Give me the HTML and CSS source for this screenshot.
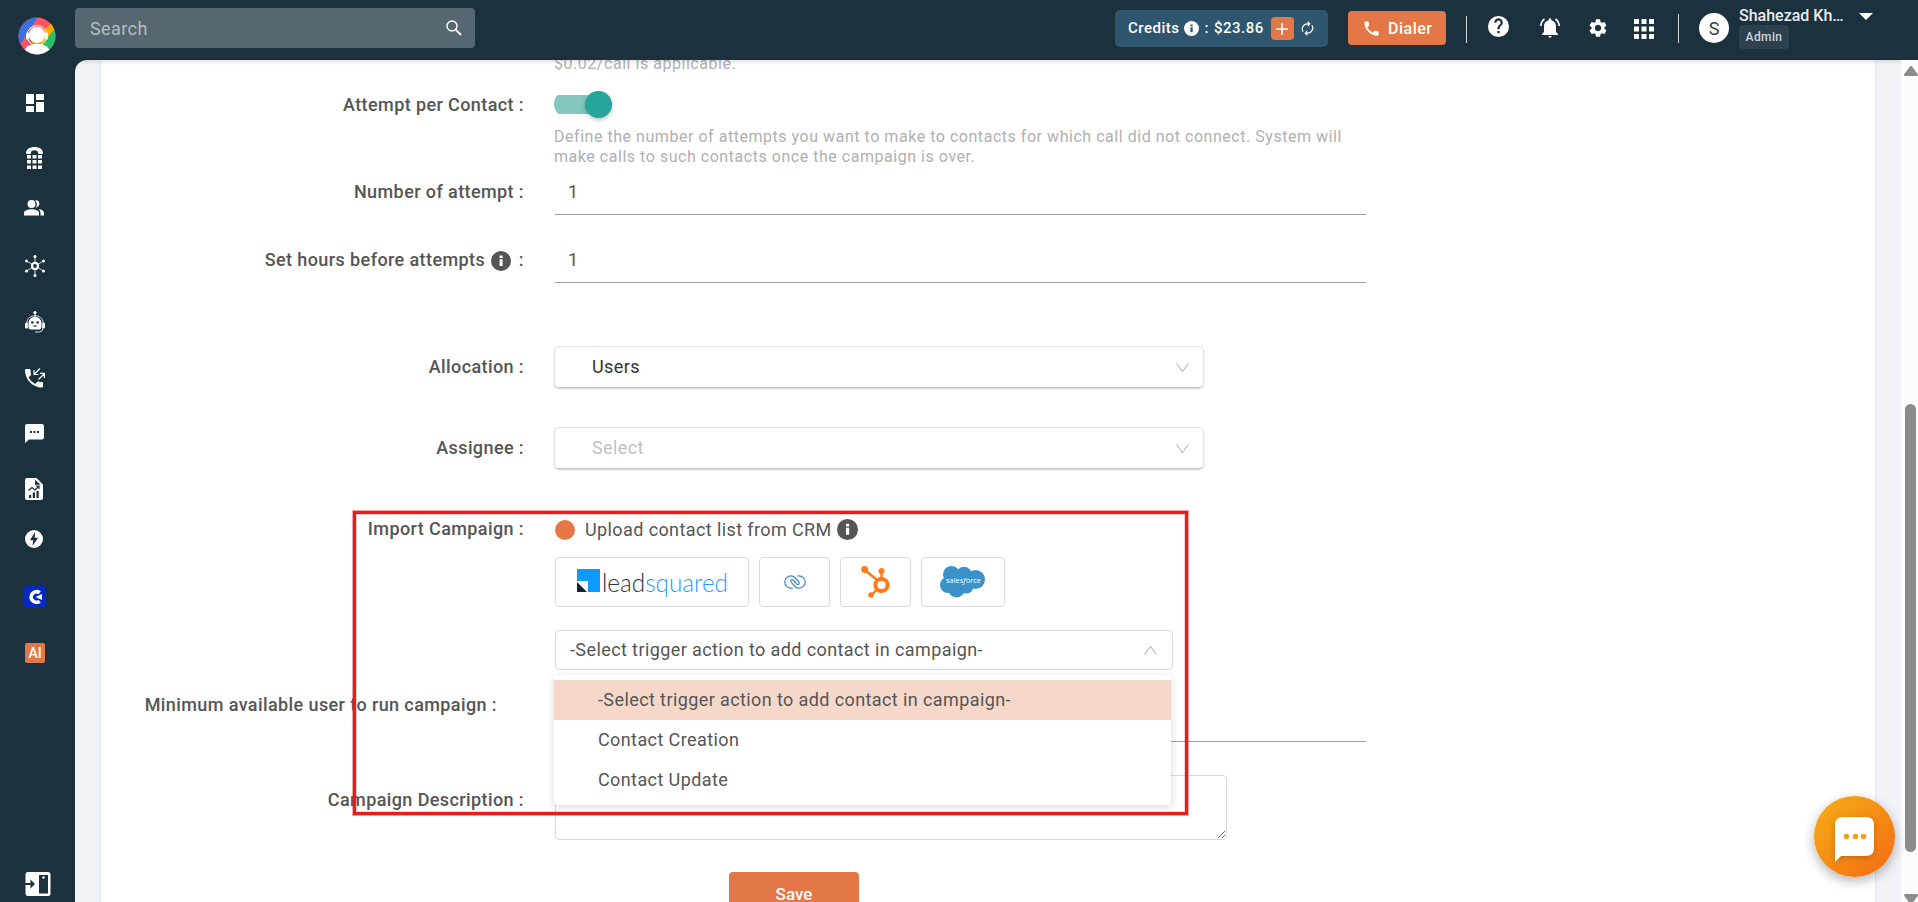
FILE: index.html
```html
<!DOCTYPE html>
<html lang="en">
<head>
  <meta charset="UTF-8">
  <meta name="viewport" content="width=device-width, initial-scale=1.0">
  <title>Campaign</title>
  <link rel="stylesheet" href="styles.css">
</head>
<body>

  <div class="app">
    <aside class="sidebar">
      <svg class="logo" viewBox="0 0 38 38">
        <defs><clipPath id="logoClip"><circle cx="19" cy="19" r="18.5"/></clipPath></defs>
        <g clip-path="url(#logoClip)">
          <rect width="38" height="38" fill="#ff5364"/>
          <path d="M0 0h20L2 28H0z" fill="#3d6fe0"/>
          <path d="M35 4l3 8-14 16-6-6z" fill="#ffab00"/>
          <path d="M38 10v28H20l4-10z" fill="#29bf6c"/>
          <ellipse cx="19" cy="35.500" rx="13" ry="9" fill="#fff"/>
        </g>
        <circle cx="19" cy="18.500" r="10" fill="none" stroke="#fff" stroke-width="1"/>
        <circle cx="19" cy="18" r="8.200" fill="#fff"/>
        <rect x="8" y="15.500" width="3" height="7" rx="1.500" fill="#fff"/>
        <rect x="27" y="15.500" width="3" height="7" rx="1.500" fill="#fff"/>
        <path d="M14 25.500q5 2.500 11-.5" fill="none" stroke="#ffab00" stroke-width=".9"/>
      </svg>
      <nav class="menu">
        <svg class="m-dash" viewBox="0 0 18 18"><path d="M0 0h8v10H0zM10 0h8v6h-8zM0 12h8v6H0zM10 8h8v10h-8z"/></svg>
        <svg class="m-pad" viewBox="0 0 17 22"><path d="M0 6C0-2 17-2 17 6q0 1-1 1h-3q-1 0-1-1.500C12 2.500 5 2.500 5 5.500 5 7 4 7 4 7H1Q0 7 0 6z"/><path d="M1 8h4v3.500H1zM6.500 8h4v3.500h-4zM12 8h4v3.500h-4zM1 13h4v3.500H1zM6.500 13h4v3.500h-4zM12 13h4v3.500h-4zM1 18.500h4V22H1zM6.500 18.500h4V22h-4zM12 18.500h4V22h-4z"/></svg>
        <svg class="m-people" viewBox="0 0 20 16"><circle cx="7.500" cy="4" r="4"/><path d="M0 15.500V13c0-5 15-5 15 0v2.500zM11 .3c5-1.300 6.500 6 .6 7.600 2-2.300 1.500-5.500-.6-7.600zM14.500 9c3 .5 5.500 1.800 5.500 4v2.500h-3.500V13c0-1.600-.8-3-2-4z"/></svg>
        <svg class="m-hub" viewBox="0 0 20 22"><path d="M10 11V1.500M10 11v9.500M10 11L1.500 6M10 11l8.500-5M10 11l-8.500 5M10 11l8.500 5" fill="none" stroke="#fff" stroke-width=".8"/><circle cx="10" cy="11" r="4.200"/><circle class="hole" cx="10" cy="11" r="1.900"/><circle cx="10" cy="1.500" r="1.500"/><circle cx="10" cy="20.500" r="1.500"/><circle cx="1.500" cy="6" r="1.500"/><circle cx="18.500" cy="6" r="1.500"/><circle cx="1.500" cy="16" r="1.500"/><circle cx="18.500" cy="16" r="1.500"/></svg>
        <svg class="m-bot" viewBox="0 0 20 22"><circle cx="10" cy="1.600" r="1.600"/><path d="M9.500 2h1v4h-1zM3.500 12.500C3.500 3.500 16.500 3.500 16.500 12.500V16q0 2.500-2.500 2.500H6Q3.500 18.500 3.500 16zM0 13q0-1.500 1.500-1.500h1.300v6H1.500Q0 17.500 0 16zM17.200 11.500h1.300q1.500 0 1.500 1.500v3q0 1.500-1.500 1.500h-1.300z"/><path d="M1.800 11.500C2.500 2.500 17.500 2.500 18.200 11.500M17.800 17.500q0 3.500-3.500 3.500H10" fill="none" stroke="#fff" stroke-width=".8"/><circle class="hole" cx="7.300" cy="11.500" r="1.300"/><circle class="hole" cx="12.700" cy="11.500" r="1.300"/><path class="hole" d="M7.500 14.500h5q-2.500 2.500-5 0z"/></svg>
        <svg class="m-call" viewBox="0 0 20 20"><path d="M4.500 1H1Q0 1 0 2c0 9.500 7.500 17.500 17 17.500q1 0 1-1v-3.500q0-1-1-1c-1.200 0-2.500-.2-3.500-.6q-.6-.1-1 .2L10.200 16A15 15 0 0 1 3.500 9.500L5.800 7.200q.3-.4.200-1C5.700 5 5.500 3.700 5.500 2q0-1-1-1z"/><path d="M15 .5L9.500 6M9 2v4.500h4.500M13.500 11.500L19 6M15 5.300h4.400V10" fill="none" stroke="#fff" stroke-width="1.200"/></svg>
        <svg class="m-chat" viewBox="0 0 19 19"><path d="M2 0h15q2 0 2 2v11.500q0 2-2 2H4L0 19V2Q0 0 2 0z"/><path class="hole" d="M5 7h2v2H5zM8.500 7h2v2h-2zM12 7h2v2h-2z"/></svg>
        <svg class="m-report" viewBox="0 0 18 22"><path d="M2 0h9.500L18 6.500V20q0 2-2 2H2q-2 0-2-2V2Q0 0 2 0z"/><path class="hole" d="M10 1.800v5h5.500zM4 17h2.200v3H4zM7.800 14.500H10V20H7.800zM11.500 13h2.200v7h-2.200z"/><path d="M3.500 12.500l3.500-3 3 2.500 4-4M11 8h3v3" fill="none" stroke="#1b313e" stroke-width="1.200"/></svg>
        <svg class="m-bolt" viewBox="0 0 18 18"><circle cx="9" cy="9" r="9"/><path class="hole" d="M10 2L5 10.200h3.300L7.500 16l5.700-8.200H9.700z"/></svg>
        <svg class="m-c" viewBox="0 0 22 22"><rect width="22" height="22" rx="3.500" fill="#0429c4"/><path d="M15.700 6.800A5.300 5.300 0 1 0 15.700 15.200" fill="none" stroke="#fff" stroke-width="3.700"/><path d="M11.500 11l6.500-3v6z"/></svg>
        <span class="m-ai">AI</span>
        <svg class="m-toggle" viewBox="0 0 26 24"><rect x=".5" width="25" height="24" rx="2.500"/><path class="hole" d="M14 3h9v18.500h-9zM0 11h5.500V7.500l4.500 4.500-4.500 4.500V13H0z"/><circle cx="18.500" cy="5.500" r="1.200"/></svg>
      </nav>
    </aside>

    <header class="topbar">
      <div class="search">
        <span>Search</span>
        <svg viewBox="0 0 16 16"><circle cx="6" cy="6" r="5" fill="none" stroke="#fff" stroke-width="1.400"/><path d="M9.700 9.700l5.300 5.300" stroke="#fff" stroke-width="1.800"/></svg>
      </div>
      <div class="credits">
        <span>Credits</span>
        <svg class="info" viewBox="0 0 24 24"><circle cx="12" cy="12" r="12" fill="#fff"/><path d="M10.300 10h3.600v8h-3.600zM10.300 5.500h3.600v3h-3.600z" fill="#2f566f"/></svg>
        <span>:</span>
        <span class="amount">$23.86</span>
        <span class="plus"><svg viewBox="0 0 12 12"><path d="M6 0v12M0 6h12" stroke="#fff" stroke-width="1.600"/></svg></span>
        <svg class="sync" viewBox="0 0 14 16"><path d="M2.300 11.500A5.500 5.500 0 0 1 7 3h1.500M11.700 4.500A5.500 5.500 0 0 1 7 13H5.500" fill="none" stroke="#fff" stroke-width="1.300"/><path d="M7.300 0l3 3-3 3zM6.700 10l-3 3 3 3z" fill="#fff"/></svg>
      </div>
      <button class="dialer"><svg viewBox="0 0 24 24"><path d="M20 15.500c-1.200 0-2.500-.2-3.600-.6q-.6-.1-1 .2l-2.200 2.200A15 15 0 0 1 6.600 10.800l2.200-2.200q.4-.4.200-1C8.700 6.500 8.500 5.300 8.500 4q0-1-1-1H4Q3 3 3 4c0 9.400 7.600 17 17 17q1 0 1-1v-3.500q0-1-1-1z"/></svg>Dialer</button>
      <i class="sep sep-1"></i>
      <svg class="t-help" viewBox="0 0 24 24"><path d="M12 1a11 11 0 1 0 0 22 11 11 0 0 0 0-22zm1.200 18h-2.400v-2.400h2.400zm2.300-8.500l-1 1c-.9.900-1.300 1.700-1.300 3.300h-2.400v-.6c0-1.200.5-2.300 1.300-3.200l1.400-1.400c.4-.4.700-1 .7-1.600a2.200 2.200 0 0 0-4.400 0H7.500a4.500 4.500 0 0 1 9 0c0 1-.4 1.900-1 2.500z"/></svg>
      <svg class="t-bell" viewBox="0 0 20 20"><path d="M4 8c0-3 2-5 4.800-5.700V1.500a1.200 1.200 0 0 1 2.400 0v.8C14 3 16 5 16 8v6l2 2v1H2v-1l2-2zM8.300 18h3.400q-.3 1.800-1.700 1.800T8.300 18z"/><path d="M.8 8Q1 3.500 4.500 1M19.200 8Q19 3.500 15.500 1" fill="none" stroke="#fff" stroke-width="1.600"/></svg>
      <svg class="t-gear" viewBox="2.200 2 19.600 20"><path d="M19.140 12.940c.04-.3.060-.61.060-.94 0-.32-.02-.64-.07-.94l2.030-1.580c.18-.14.230-.41.120-.61l-1.920-3.320c-.12-.22-.37-.29-.59-.22l-2.390.96c-.5-.38-1.030-.7-1.620-.94l-.36-2.540c-.04-.24-.24-.41-.48-.41h-3.840c-.24 0-.43.17-.47.41l-.36 2.540c-.59.240-1.130.57-1.620.94l-2.390-.96c-.22-.08-.47 0-.59.220L2.740 8.870c-.12.210-.08.470.120.610l2.030 1.580c-.05.3-.09.630-.09.940s.02.640.07.940l-2.030 1.580c-.18.140-.23.410-.12.610l1.920 3.320c.12.220.37.290.59.220l2.390-.96c.5.380 1.030.7 1.620.94l.36 2.540c.05.240.240.410.480.410h3.840c.24 0 .44-.17.470-.41l.36-2.540c.59-.24 1.130-.56 1.620-.94l2.390.96c.22.080.470 0 .59-.22l1.920-3.320c.12-.22.070-.47-.12-.61l-2.010-1.580zM12 15.600c-1.980 0-3.600-1.620-3.600-3.600s1.620-3.600 3.600-3.600 3.600 1.620 3.600 3.600-1.620 3.600-3.600 3.600z"/></svg>
      <svg class="t-apps" viewBox="0 0 20 20"><path d="M0 0h5v5H0zM7.500 0h5v5h-5zM15 0h5v5h-5zM0 7.500h5v5H0zM7.500 7.500h5v5h-5zM15 7.500h5v5h-5zM0 15h5v5H0zM7.500 15h5v5h-5zM15 15h5v5h-5z"/></svg>
      <i class="sep sep-2"></i>
      <div class="avatar">S</div>
      <div class="user">
        <div class="user-name">Shahezad Kh…</div>
        <span class="role">Admin</span>
      </div>
      <svg class="caret" viewBox="0 0 14 7"><path d="M0 0h14L7 7z"/></svg>
    </header>

    <main class="content">
      <form class="panel">
        <div class="row hint-row">
          <span></span>
          <p class="hint">$0.02/call is applicable.</p>
        </div>

        <div class="row attempt-row">
          <label>Attempt per Contact :</label>
          <div class="switch"><i></i></div>
        </div>
        <div class="row hint-row-2">
          <span></span>
          <p class="hint">Define the number of attempts you want to make to contacts for which call did not connect. System will<br>make calls to such contacts once the campaign is over.</p>
        </div>

        <div class="row number-row">
          <label for="attempts">Number of attempt :</label>
          <input class="line-input" id="attempts" type="text" value="1">
        </div>

        <div class="row hours-row">
          <label for="hours">Set hours before attempts
            <svg class="info" viewBox="0 0 24 24"><circle cx="12" cy="12" r="12" fill="#555"/><path d="M10.300 10h3.600v8h-3.600zM10.300 5.500h3.600v3h-3.600z" fill="#fff"/></svg>
            :</label>
          <input class="line-input" id="hours" type="text" value="1">
        </div>

        <div class="row allocation-row">
          <label>Allocation :</label>
          <div class="select">
            <span>Users</span>
            <svg class="chevron" viewBox="0 0 13 9"><path d="M.5.500l6 8 6-8"/></svg>
          </div>
        </div>

        <div class="row assignee-row">
          <label>Assignee :</label>
          <div class="select placeholder">
            <span>Select</span>
            <svg class="chevron" viewBox="0 0 13 9"><path d="M.5.500l6 8 6-8"/></svg>
          </div>
        </div>

        <div class="row import-row">
          <label>Import Campaign :</label>
          <div>
            <div class="upload">
              <i class="dot"></i>
              <span>Upload contact list from CRM</span>
              <svg class="info" viewBox="0 0 24 24"><circle cx="12" cy="12" r="12" fill="#555"/><path d="M10.300 10h3.600v8h-3.600zM10.300 5.500h3.600v3h-3.600z" fill="#fff"/></svg>
            </div>

            <div class="crm-list">
              <div class="crm crm-lead">
                <svg viewBox="0 0 152 30">
                  <path d="M0 0h23v23H11V12H0z" fill="#0e9bff"/>
                  <path d="M0 13l10 10H0z" fill="#12233a"/>
                  <text x="25" y="23" textLength="126" lengthAdjust="spacingAndGlyphs" fill="#2b3347">lead<tspan fill="#2b9cff">squared</tspan></text>
                </svg>
              </div>
              <div class="crm crm-zoho">
                <svg viewBox="0 0 22 14"><path d="M9 13Q8 13.200 7 13.200A6.200 6.200 0 0 1 7 .8q2.400 0 4 1.700l3.700 4.100q1.200 1.600.2 2.500t-2.400-.4L10 6M13 1q1-.2 2-.2a6.200 6.200 0 0 1 0 12.400q-2.400 0-4-1.700L7.300 7.400Q6.100 5.800 7.100 4.900t2.400.4L12 8" fill="none" stroke="#3e86c4" stroke-width="1.200"/></svg>
              </div>
              <div class="crm crm-hub">
                <svg viewBox="0 0 29 32"><g fill="none" stroke="#ff7a1a"><circle cx="20.500" cy="19" r="6.100" stroke-width="4"/><path d="M20.500 13V5M16 14L4 4M16 23.500L10.500 29" stroke-width="2.400"/></g><g fill="#ff7a1a"><circle cx="3.600" cy="3.500" r="3.400"/><circle cx="20.500" cy="5" r="3"/><circle cx="10" cy="29" r="2.700"/></g></svg>
              </div>
              <div class="crm crm-sales">
                <svg viewBox="0 0 45 32">
                  <g fill="#3a92c9"><circle cx="11.500" cy="8.500" r="8.500"/><circle cx="24" cy="8.500" r="7.700"/><circle cx="35.500" cy="13.500" r="9.500"/><circle cx="8" cy="19" r="8"/><circle cx="16.500" cy="23" r="8.500"/><circle cx="26.500" cy="20.500" r="7"/><path d="M9 8h25v14H9z"/></g>
                  <text x="6" y="17" textLength="35" lengthAdjust="spacingAndGlyphs" fill="#fff">sales<tspan font-style="italic">f</tspan>orce</text>
                </svg>
              </div>
            </div>

            <div class="trigger">
              <div class="trigger-box">
                <span>-Select trigger action to add contact in campaign-</span>
                <svg class="chevron" viewBox="0 0 13 9"><path d="M.5 8.500l6-8 6 8"/></svg>
              </div>
              <ul class="dropdown">
                <li class="active">-Select trigger action to add contact in campaign-</li>
                <li>Contact Creation</li>
                <li>Contact Update</li>
              </ul>
            </div>
          </div>
        </div>

        <div class="row min-row">
          <label for="minUser">Minimum available user to run campaign :</label>
          <input class="line-input" id="minUser" type="text">
        </div>

        <div class="row desc-row">
          <label for="desc">Campaign Description :</label>
          <textarea id="desc"></textarea>
        </div>

        <button type="button" class="save">Save</button>
      </form>
      <div class="highlight"></div>
    </main>

    <div class="scrollbar">
      <svg class="arrow" viewBox="0 0 14 10"><path d="M7 0q1 0 1.500 1L14 8.500Q14 10 13 10H1Q0 10 0 8.500L5.500 1Q6 0 7 0z"/></svg>
      <i class="thumb"></i>
      <svg class="arrow" viewBox="0 0 14 10"><path d="M7 10q1 0 1.500-1L14 1.500Q14 0 13 0H1Q0 0 0 1.500L5.500 9Q6 10 7 10z"/></svg>
    </div>
  </div>

  <div class="chat-btn">
    <svg viewBox="0 0 40 46"><path d="M8 0h23q8 0 8 8v23q0 8-8 8H6L0 45V8Q0 0 8 0z" fill="#fff"/><g fill="#f59e14"><circle cx="11.500" cy="19.500" r="2.700"/><circle cx="20.500" cy="19.500" r="2.700"/><circle cx="28.500" cy="19.500" r="2.700"/></g></svg>
  </div>

</body>
</html>
```
FILE: styles.css
```css
:root {
  --dark: #1b313e;
  --orange: #e47748;
  --text: #555;
  --border: #d9d9d9;
}
* {
  box-sizing: border-box;
}
body {
  margin: 0;
  font-family: Roboto, "Liberation Sans", sans-serif;
  font-size: 18px;
  letter-spacing: 0.4px;
  color: var(--text);
  background: var(--dark);
  overflow: hidden;
}
svg {
  display: block;
  flex: none;
}
p, ul {
  margin: 0;
  padding: 0;
}
.app {
  display: grid;
  grid-template-columns: 75px 1fr 17px;
  grid-template-rows: 60px 1fr;
  height: 902px;
}

/* Sidebar */
.sidebar {
  grid-row: 1 / 3;
  display: flex;
  flex-direction: column;
  padding-top: 17px;
}
.logo {
  width: 38px;
  height: 38px;
  margin-left: 18px;
}
.menu {
  flex: 1;
  display: flex;
  flex-direction: column;
  padding: 39px 0 6px 25px;
}
.menu svg {
  fill: #fff;
}
.menu .hole {
  fill: var(--dark);
}
.menu .m-dash {
  width: 18px;
  height: 18px;
  margin-left: 1px;
}
.menu .m-pad {
  width: 17px;
  height: 22px;
  margin: 35px 0 0 1px;
}
.menu .m-people {
  width: 20px;
  height: 16px;
  margin: 31px 0 0 -1px;
}
.menu .m-hub {
  width: 20px;
  height: 22px;
  margin-top: 39px;
}
.menu .m-bot {
  width: 20px;
  height: 22px;
  margin-top: 34px;
}
.menu .m-call {
  width: 20px;
  height: 20px;
  margin-top: 35px;
}
.menu .m-chat {
  width: 19px;
  height: 19px;
  margin-top: 36px;
}
.menu .m-report {
  width: 18px;
  height: 22px;
  margin-top: 35px;
}
.menu .m-bolt {
  width: 18px;
  height: 18px;
  margin-top: 30px;
}
.menu .m-c {
  width: 22px;
  height: 22px;
  margin: 38px 0 0 -1px;
}
.m-ai {
  width: 20px;
  height: 20px;
  margin-top: 35px;
  background: var(--orange);
  border-radius: 2px;
  color: #fff;
  font-size: 14px;
  font-weight: 500;
  line-height: 20px;
  letter-spacing: 0;
  text-align: center;
}
.menu .m-toggle {
  width: 26px;
  height: 24px;
  margin-top: auto;
}

/* Top bar */
.topbar {
  grid-column: 2 / 4;
  display: flex;
  align-items: flex-start;
}
.topbar > svg {
  fill: #fff;
}
.search {
  display: flex;
  align-items: center;
  justify-content: space-between;
  width: 400px;
  height: 40px;
  margin-top: 8px;
  padding: 0 13px 0 15px;
  background: #556770;
  border-radius: 4px;
  color: #b9bcbd;
}
.search svg {
  width: 16px;
  height: 16px;
}
.credits {
  display: flex;
  align-items: center;
  width: 213px;
  height: 37px;
  margin: 10px 0 0 640px;
  padding-left: 13px;
  background: #2f566f;
  border-radius: 5px;
  color: #fff;
  font-size: 15px;
  font-weight: 500;
  line-height: 15px;
  letter-spacing: 0.5px;
}
.credits .info {
  width: 15px;
  height: 15px;
  margin: 0 5px;
}
.credits .amount {
  margin-left: 5px;
}
.credits .plus {
  display: flex;
  align-items: center;
  justify-content: center;
  width: 23px;
  height: 23px;
  margin-left: 7px;
  background: var(--orange);
  border-radius: 4px;
}
.plus svg {
  width: 12px;
  height: 12px;
}
.sync {
  width: 13px;
  height: 15px;
  margin-left: 7px;
}
.dialer {
  display: flex;
  align-items: center;
  gap: 7px;
  width: 98px;
  height: 34px;
  margin: 11px 0 0 20px;
  padding: 0 0 0 14px;
  background: var(--orange);
  border: 0;
  border-radius: 4px;
  color: #fff;
  font: 500 16px Roboto, sans-serif;
  letter-spacing: 0.5px;
}
.dialer svg {
  width: 19px;
  height: 19px;
  fill: #fff;
}
.sep {
  width: 1px;
  background: #d5dadd;
}
.sep-1 {
  height: 27px;
  margin: 16px 0 0 20px;
}
.sep-2 {
  height: 29px;
  margin: 14px 0 0 24px;
}
.t-help {
  width: 23px;
  height: 23px;
  margin: 15px 0 0 20px;
}
.t-bell {
  width: 20px;
  height: 20px;
  margin: 18px 0 0 30px;
}
.t-gear {
  width: 18px;
  height: 18px;
  margin: 19px 0 0 29px;
}
.t-apps {
  width: 20px;
  height: 20px;
  margin: 19px 0 0 27px;
}
.avatar {
  width: 30px;
  height: 30px;
  margin: 13px 0 0 20px;
  background: #fff;
  border-radius: 50%;
  color: #333f48;
  font-size: 18px;
  line-height: 31px;
  letter-spacing: 0;
  text-align: center;
}
.user {
  width: 104px;
  margin: 6px 0 0 10px;
}
.user-name {
  color: #e9ecee;
  font-size: 16px;
  font-weight: 500;
  line-height: 19px;
  letter-spacing: 0;
  white-space: nowrap;
}
.role {
  display: block;
  width: 50px;
  height: 24px;
  background: #2c414d;
  border-radius: 4px;
  color: #cfd6da;
  font-size: 12px;
  font-weight: 500;
  line-height: 24px;
  text-align: center;
}
.caret {
  width: 14px;
  height: 7px;
  margin: 13px 0 0 16px;
}

/* Form */
.content {
  position: relative;
  padding: 0 25px;
  background: #f1f3f8;
  border-radius: 12px 0 0 0;
  overflow: hidden;
}
.content::before {
  content: "";
  position: absolute;
  inset: 0 0 auto;
  height: 5px;
  background: linear-gradient(rgba(0,0,0,0.1), transparent);
}
.panel {
  height: 842px;
  background: #fff;
  border: solid #e4e6ea;
  border-width: 0 1px;
  overflow: hidden;
}
.row {
  display: grid;
  grid-template-columns: 423px 1fr;
  column-gap: 30px;
  align-items: center;
}
label {
  font-weight: 500;
  line-height: 20px;
  text-align: right;
  white-space: nowrap;
}
.attempt-row label,
.number-row label,
.hours-row label {
  padding-top: 2px;
}
label .info {
  display: inline-block;
  width: 20px;
  height: 20px;
  margin: 0 3px 0 1px;
  vertical-align: -5px;
}
.hint {
  color: #b0b0b0;
  font-size: 16px;
  line-height: 20px;
  letter-spacing: 0.535px;
  white-space: nowrap;
}
.hint-row {
  margin-top: -6px;
}
.attempt-row {
  margin-top: 17px;
}
.hint-row-2 {
  margin: 10px 0 0;
}
.switch {
  display: flex;
  align-items: center;
  justify-content: flex-end;
  width: 58px;
  height: 26px;
  background: linear-gradient(#84c7c1, #84c7c1) 0 4px / 50px 19px no-repeat;
  border-radius: 13px;
}
.switch i {
  width: 27px;
  height: 27px;
  background: #26a69a;
  border-radius: 50%;
  box-shadow: 0 2px 4px rgba(0,0,0,0.25);
}
.line-input {
  width: 811px;
  height: 48px;
  margin-left: 1px;
  padding: 2px 14px 0 13px;
  border: 0;
  border-bottom: 1px solid #9e9e9e;
  background: none;
  color: var(--text);
  font: 18px Roboto, sans-serif;
}
.hours-row {
  margin-top: 20px;
}
.select {
  display: flex;
  align-items: center;
  justify-content: space-between;
  width: 650px;
  height: 42px;
  padding: 0 14px 0 37px;
  border: 1px solid #e2e2e2;
  border-bottom-color: #c9c9c9;
  border-radius: 5px;
  box-shadow: 0 1px 2px rgba(0,0,0,0.2);
  color: #333;
  line-height: 40px;
}
.select.placeholder {
  color: #bfbfbf;
}
.chevron {
  width: 13px;
  height: 9px;
  fill: none;
  stroke: #bbb;
  stroke-width: 1.2;
}
.allocation-row {
  margin-top: 63px;
}
.assignee-row {
  margin-top: 39px;
}
.import-row {
  align-items: start;
  margin-top: 50px;
}
.import-row > div {
  padding-left: 1px;
}
.upload {
  display: flex;
  align-items: center;
  height: 21px;
}
.dot {
  width: 20px;
  height: 20px;
  margin-right: 10px;
  background: var(--orange);
  border-radius: 50%;
}
.upload .info {
  width: 21px;
  height: 21px;
  margin-left: 5px;
}
.crm-list {
  display: flex;
  gap: 10px;
  margin-top: 17px;
}
.crm {
  display: flex;
  align-items: center;
  justify-content: center;
  height: 50px;
  border: 1px solid var(--border);
  border-radius: 4px;
}
.crm svg {
  overflow: visible;
}
.crm-lead {
  width: 194px;
}
.crm-lead svg {
  width: 152px;
  height: 30px;
  margin: 4px 0 0 2px;
}
.crm-lead text {
  font: 25px Lato, sans-serif;
  font-weight: 300;
  letter-spacing: 0;
}
.crm-zoho {
  width: 71px;
}
.crm-zoho svg {
  width: 22px;
  height: 14px;
}
.crm-hub {
  width: 71px;
}
.crm-hub svg {
  width: 29px;
  height: 32px;
}
.crm-sales {
  width: 84px;
}
.crm-sales svg {
  width: 45px;
  height: 32px;
  margin-right: 2px;
}
.crm-sales text {
  font: 8px "Open Sans", sans-serif;
  letter-spacing: 0;
}
.trigger {
  position: relative;
  width: 618px;
  margin-top: 23px;
}
.trigger-box {
  display: flex;
  align-items: center;
  justify-content: space-between;
  height: 40px;
  padding: 0 15px 0 14px;
  border: 1px solid var(--border);
  border-radius: 4px;
  line-height: 38px;
}
.dropdown {
  position: absolute;
  z-index: 2;
  top: 45px;
  left: -1px;
  width: 617px;
  height: 130px;
  padding: 5px 0;
  background: #fff;
  border-radius: 4px;
  box-shadow: 0 2px 8px rgba(0,0,0,0.15);
  list-style: none;
}
.dropdown li {
  height: 40px;
  padding-left: 44px;
  line-height: 40px;
}
.dropdown .active {
  background: #f6d8cb;
}
.min-row {
  align-items: start;
  margin-top: 24px;
}
.min-row label {
  padding: 1px 27px 0 0;
}
.desc-row {
  align-items: start;
  margin-top: 33px;
}
.desc-row label {
  padding-top: 15px;
}
textarea {
  width: 672px;
  height: 65px;
  margin-left: 1px;
  border: 1px solid var(--border);
  border-radius: 4px;
}
.save {
  display: block;
  width: 130px;
  height: 44px;
  margin: 32px 0 0 628px;
  background: var(--orange);
  border: 0;
  border-radius: 4px;
  color: #fff;
  font: 500 17px Roboto, sans-serif;
}

/* Red frame over the CRM import block */
.highlight {
  position: absolute;
  z-index: 3;
  top: 451px;
  left: 278px;
  width: 835px;
  height: 304px;
  border: 3px solid #e71c1c;
  box-shadow: 0 0 0 1px rgba(231,28,28,0.4), inset 0 0 0 1px rgba(231,28,28,0.2);
}

/* Scrollbar */
.scrollbar {
  display: flex;
  flex-direction: column;
  align-items: flex-end;
  padding-top: 6px;
  background: #fcfcfc;
  overflow: hidden;
}
.arrow {
  width: 14px;
  height: 10px;
  fill: #8b8b8b;
}
.thumb {
  width: 11px;
  height: 448px;
  margin: 328px 2px 42px 0;
  background: #8b8b8b;
  border-radius: 6px;
  flex: none;
}
.chat-btn {
  position: fixed;
  right: 23px;
  bottom: 25px;
  width: 81px;
  height: 81px;
  padding: 21px 0 0 21px;
  background: linear-gradient(135deg, #f5b014, #f56a14);
  border-radius: 50%;
  box-shadow: 0 4px 12px rgba(0,0,0,0.3);
}
.chat-btn svg {
  width: 40px;
  height: 46px;
  filter: drop-shadow(0 2px 3px rgba(0,0,0,0.2));
}
```
